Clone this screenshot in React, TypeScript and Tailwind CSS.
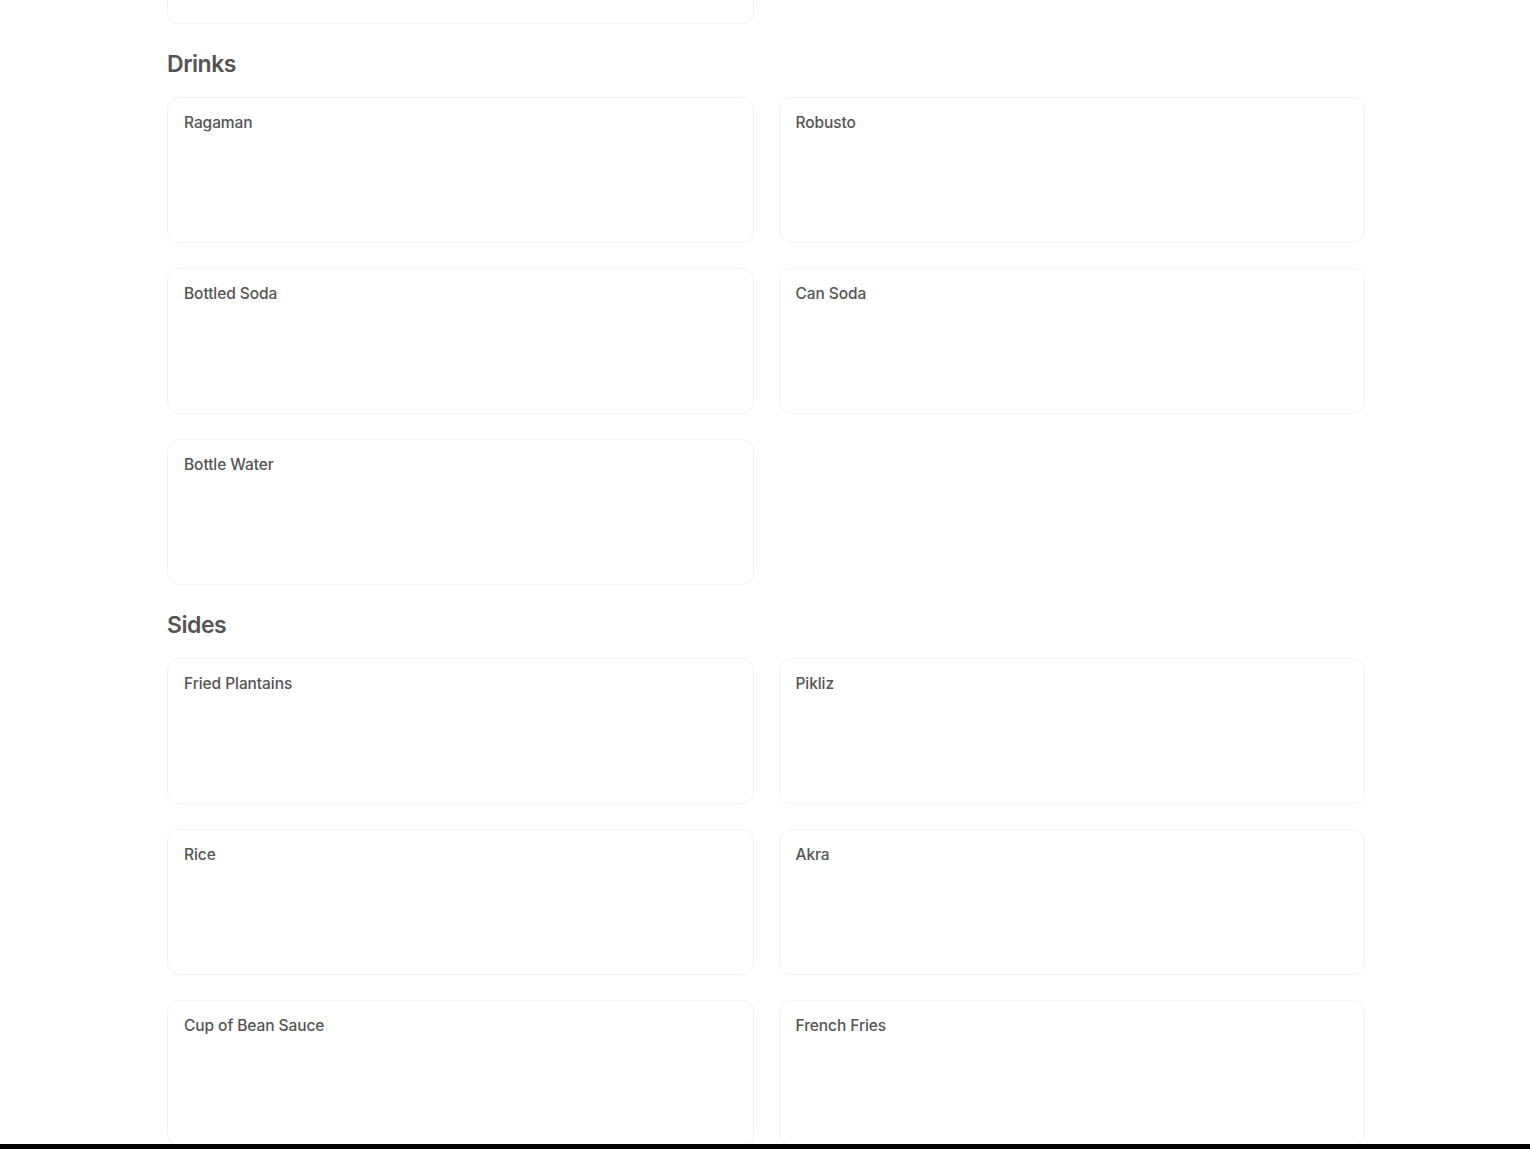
const sections = [
  { title: 'Drinks', items: ['Ragaman', 'Robusto', 'Bottled Soda', 'Can Soda', 'Bottle Water'] },
  { title: 'Sides', items: ['Fried Plantains', 'Pikliz', 'Rice', 'Akra', 'Cup of Bean Sauce', 'French Fries'] },
];

function ItemCard({ name }: { name: string }) {
  return (
    <div className="h-[146px] rounded-xl border border-[#f2f2f2] bg-white px-4 pt-[15px]">
      <div className="text-[15.5px] leading-5 font-medium tracking-[-0.005em] text-[#545454]">{name}</div>
    </div>
  );
}

export default function App() {
  return (
    <div className="h-[1149px] overflow-hidden bg-white flex flex-col" style={{ fontFamily: 'Inter, "Noto Sans", sans-serif' }}>
      <div className="flex-1 overflow-hidden">
        <div className="w-[1198px] ml-[167px]">
          {/* tail of the previous section */}
          <div className="grid grid-cols-2 gap-x-[25px]">
            <div className="h-[24px] rounded-b-xl border border-t-0 border-[#f2f2f2] bg-white" />
          </div>

          {sections.map((s) => (
            <section key={s.title} className="pt-[24px]">
              <h2 className="text-[23px] leading-8 font-semibold tracking-[-0.02em] text-[#545454] pb-[17px]">
                {s.title}
              </h2>
              <div className="grid grid-cols-2 gap-x-[25px] gap-y-[25px]">
                {s.items.map((item) => (
                  <ItemCard key={item} name={item} />
                ))}
              </div>
            </section>
          ))}
        </div>
      </div>
      <div className="h-[5px] bg-black shrink-0" />
    </div>
  );
}
